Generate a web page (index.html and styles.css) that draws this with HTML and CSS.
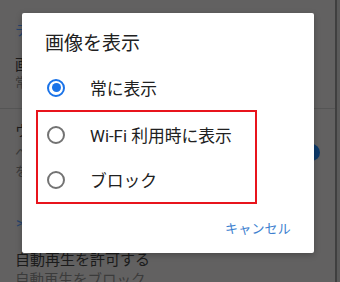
FILE: index.html
```html
<!DOCTYPE html>
<html lang="ja">
<head>
<meta charset="utf-8">
<title>画像を表示</title>
<link rel="stylesheet" href="styles.css">
</head>
<body>
<div class="screen">
  <div class="page">
    <div class="section-head">テキストと画像</div>
    <div class="item item--first">
      <div class="item-title">画像を表示</div>
      <div class="item-sub">常に表示</div>
    </div>
    <div class="divider"></div>
    <div class="item item--toggle">
      <div class="item-text">
        <div class="item-title">ウェブフォント</div>
        <div class="item-sub">ヘッダーのフォントを読み込む</div>
        <div class="item-sub">を許可する</div>
      </div>
      <div class="toggle"><span class="knob"></span></div>
    </div>
    <div class="expand">&gt;</div>
    <div class="item item--last">
      <div class="item-title">自動再生を許可する</div>
      <div class="item-sub">自動再生をブロック</div>
    </div>
  </div>
  <div class="edge"></div>
  <div class="rest"></div>

  <div class="dialog">
    <div class="dialog-title">画像を表示</div>
    <div class="option">
      <span class="radio radio--on"></span>
      <span class="option-label">常に表示</span>
    </div>
    <div class="highlight">
      <div class="option option--boxed">
        <span class="radio"></span>
        <span class="option-label">Wi-Fi 利用時に表示</span>
      </div>
      <div class="option option--boxed">
        <span class="radio"></span>
        <span class="option-label">ブロック</span>
      </div>
    </div>
    <div class="actions">
      <span class="btn">キャンセル</span>
    </div>
  </div>
</div>
</body>
</html>
```

FILE: styles.css
```css
html, body {
  margin: 0;
  padding: 0;
}
body {
  width: 340px;
  height: 282px;
  overflow: hidden;
  font-family: Roboto, "Noto Sans CJK JP", sans-serif;
  background: #5f5f5f;
}
.screen {
  position: relative;
  display: flex;
  width: 340px;
  height: 282px;
  overflow: hidden;
}
.page {
  width: 335px;
  flex: none;
  background: #626161;
  padding-top: 21px;
  box-sizing: border-box;
}
.edge {
  width: 2px;
  flex: none;
  background: #3f3f3f;
}
.rest {
  flex: 1;
  background: #5a5a5a;
}
.section-head {
  padding-left: 15px;
  font-size: 14px;
  line-height: 18px;
  color: #26446e;
  white-space: nowrap;
}
.item {
  padding-left: 15px;
  white-space: nowrap;
}
.item--first {
  margin-top: 18px;
  margin-bottom: 17px;
}
.item-title {
  font-size: 14.5px;
  line-height: 18px;
  color: #1b1b1b;
}
.item-sub {
  font-size: 13px;
  line-height: 16px;
  color: #3b3b3b;
}
.divider {
  height: 1px;
  background: #555555;
}
.item--toggle {
  display: flex;
  align-items: flex-start;
  padding-top: 14px;
}
.item--toggle .item-text {
  flex: 1;
}
.item--toggle .item-title {
  margin-bottom: 2px;
}
.item--toggle .item-sub {
  line-height: 19px;
}
.toggle {
  flex: none;
  width: 34px;
  height: 14px;
  margin-top: 23px;
  margin-right: 18px;
  border-radius: 7px;
  background: #2d4561;
  position: relative;
}
.knob {
  position: absolute;
  right: -3px;
  top: -2px;
  width: 17px;
  height: 17px;
  border-radius: 50%;
  background: #0d3a6a;
}
.expand {
  margin-top: 33px;
  padding-left: 16px;
  font-size: 14px;
  line-height: 18px;
  color: #26446e;
}
.item--last {
  margin-top: 19px;
}
.item--last .item-title {
  font-size: 15px;
  line-height: 18px;
}
.item--last .item-sub {
  font-size: 14.5px;
  line-height: 20px;
  margin-top: 2px;
}

/* dialog */
.dialog {
  position: absolute;
  left: 22px;
  top: 13px;
  width: 292px;
  height: 240px;
  background: #ffffff;
  border-radius: 2px;
  box-shadow: 0 2px 6px rgba(0, 0, 0, 0.25);
  box-sizing: border-box;
  padding-top: 19px;
}
.dialog-title {
  padding-left: 23px;
  font-size: 19px;
  line-height: 24px;
  color: #212121;
  margin-bottom: 9px;
}
.option {
  display: flex;
  align-items: center;
  height: 45px;
  padding-left: 25px;
}
.option--boxed {
  padding-left: 9px;
}
.radio {
  flex: none;
  width: 18px;
  height: 18px;
  box-sizing: border-box;
  border: 2px solid #737373;
  border-radius: 50%;
  position: relative;
}
.radio--on {
  border-color: #1a73e8;
}
.radio--on::after {
  content: "";
  position: absolute;
  left: 2.5px;
  top: 2.5px;
  width: 9px;
  height: 9px;
  border-radius: 50%;
  background: #1a73e8;
}
.option-label {
  margin-left: 25px;
  font-size: 16.8px;
  color: #212121;
  white-space: nowrap;
}
.highlight {
  margin-left: 14px;
  width: 221px;
  box-sizing: border-box;
  border: 2px solid #e8141c;
}
.actions {
  display: flex;
  justify-content: flex-end;
  padding-right: 23px;
  margin-top: 15px;
}
.btn {
  font-size: 13px;
  line-height: 20px;
  letter-spacing: 0.2px;
  color: #3d7fcf;
}
```
